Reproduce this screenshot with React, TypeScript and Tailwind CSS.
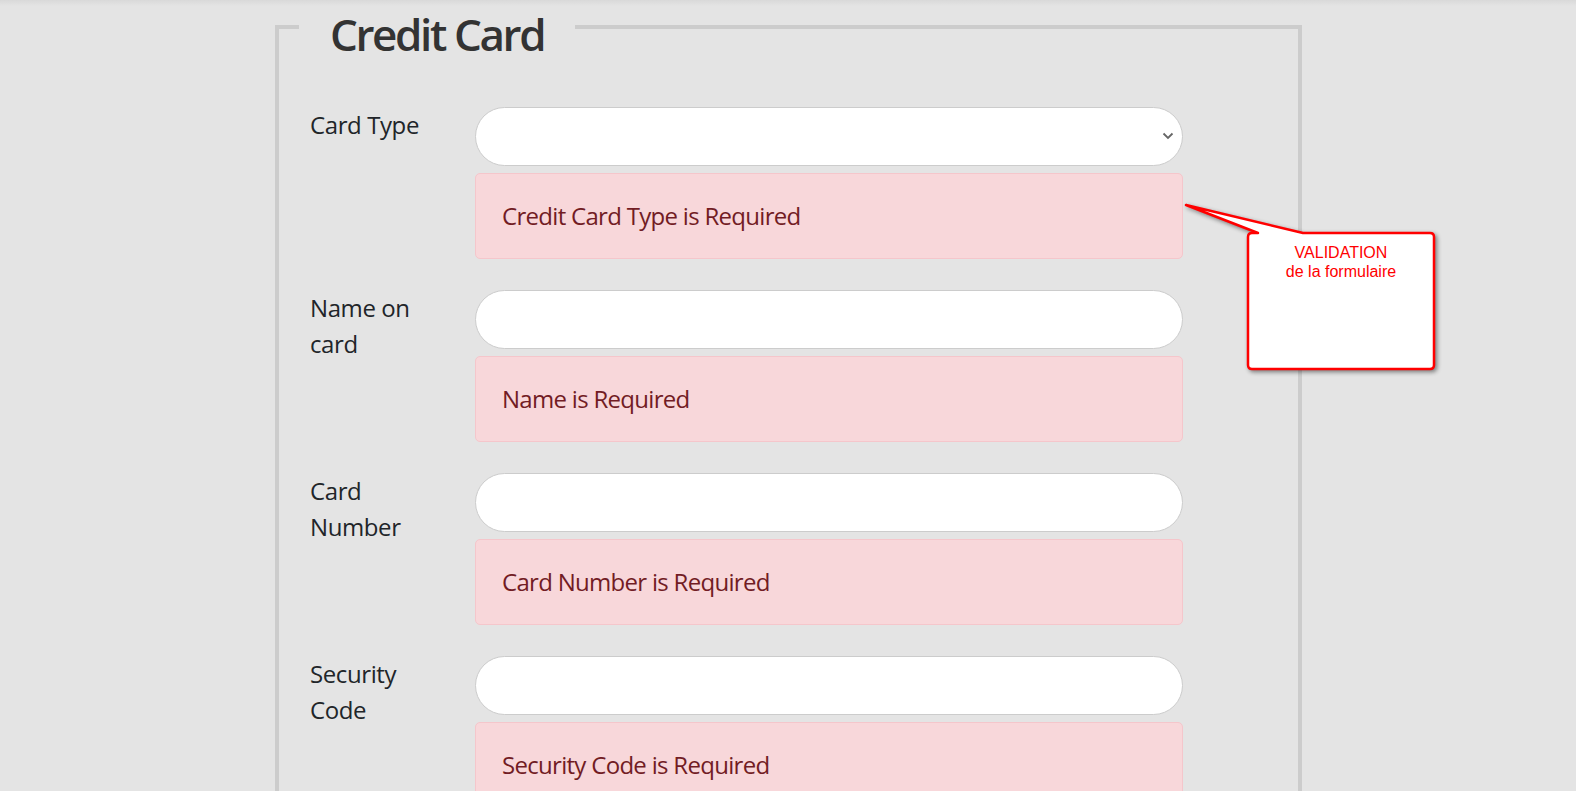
const fields = [
  { label: 'Card Type', error: 'Credit Card Type is Required', select: true },
  { label: 'Name on card', error: 'Name is Required' },
  { label: 'Card Number', error: 'Card Number is Required' },
  { label: 'Security Code', error: 'Security Code is Required' },
];

function Callout() {
  return (
    <div className="absolute left-[1180px] top-[198px] h-[180px] w-[262px]">
      <svg width="262" height="180" className="drop-shadow-[2px_2px_2px_rgba(0,0,0,0.45)]">
        <path
          d="M72 35 L78 35 L6 7 L123 35 L250 35 Q254 35 254 39 L254 167 Q254 171 250 171 L72 171 Q68 171 68 167 L68 39 Q68 35 72 35 Z"
          fill="#ffffff"
          stroke="#ff0000"
          strokeWidth="2.5"
          strokeLinejoin="round"
        />
      </svg>
      <div className="absolute left-[68px] top-[45px] w-[186px] text-center font-['Liberation_Sans',Arial,sans-serif] text-[16px] leading-[19px] text-[#ff0000]">
        VALIDATION
        <br />
        de la formulaire
      </div>
    </div>
  );
}

export default function App() {
  return (
    <div className="relative flow-root min-h-screen bg-[#e4e4e4] bg-[linear-gradient(to_bottom,#d9d9d9,#e4e4e4_6px)] font-['Open_Sans','Noto_Sans',sans-serif]">
      <fieldset className="-mt-[6px] ml-[275px] w-[1027px] border-4 border-[#cccccc] pb-[40px]">
        <legend className="ml-[20px] px-[31px] pt-[14px] text-[44px] leading-[1.2] font-semibold tracking-[-2.4px] text-[#333333]">
          Credit Card
        </legend>
        <div className="flex flex-col gap-[31px] pt-[46px]">
          {fields.map((f) => (
            <div key={f.label} className="flex">
              <label className="w-[196px] shrink-0 pl-[31px] pr-[30px] text-[24px] leading-[36px] tracking-[-0.4px] text-[#212529]">
                {f.label}
              </label>
              <div className="w-[708px]">
                <div className="flex h-[59px] items-center justify-end rounded-full border border-[#cccccc] bg-white pr-[8px]">
                  {f.select && (
                    <svg width="12" height="8" viewBox="0 0 12 8">
                      <polyline points="1.5,1.5 6,6 10.5,1.5" fill="none" stroke="#666666" strokeWidth="1.8" />
                    </svg>
                  )}
                </div>
                <div className="mt-[7px] flex h-[86px] items-center rounded-[5px] border border-[#f5c6cb] bg-[#f8d7da] px-[26px] text-[24px] leading-[36px] tracking-[-0.7px] text-[#721c24]">
                  {f.error}
                </div>
              </div>
            </div>
          ))}
        </div>
      </fieldset>
      <Callout />
    </div>
  );
}
